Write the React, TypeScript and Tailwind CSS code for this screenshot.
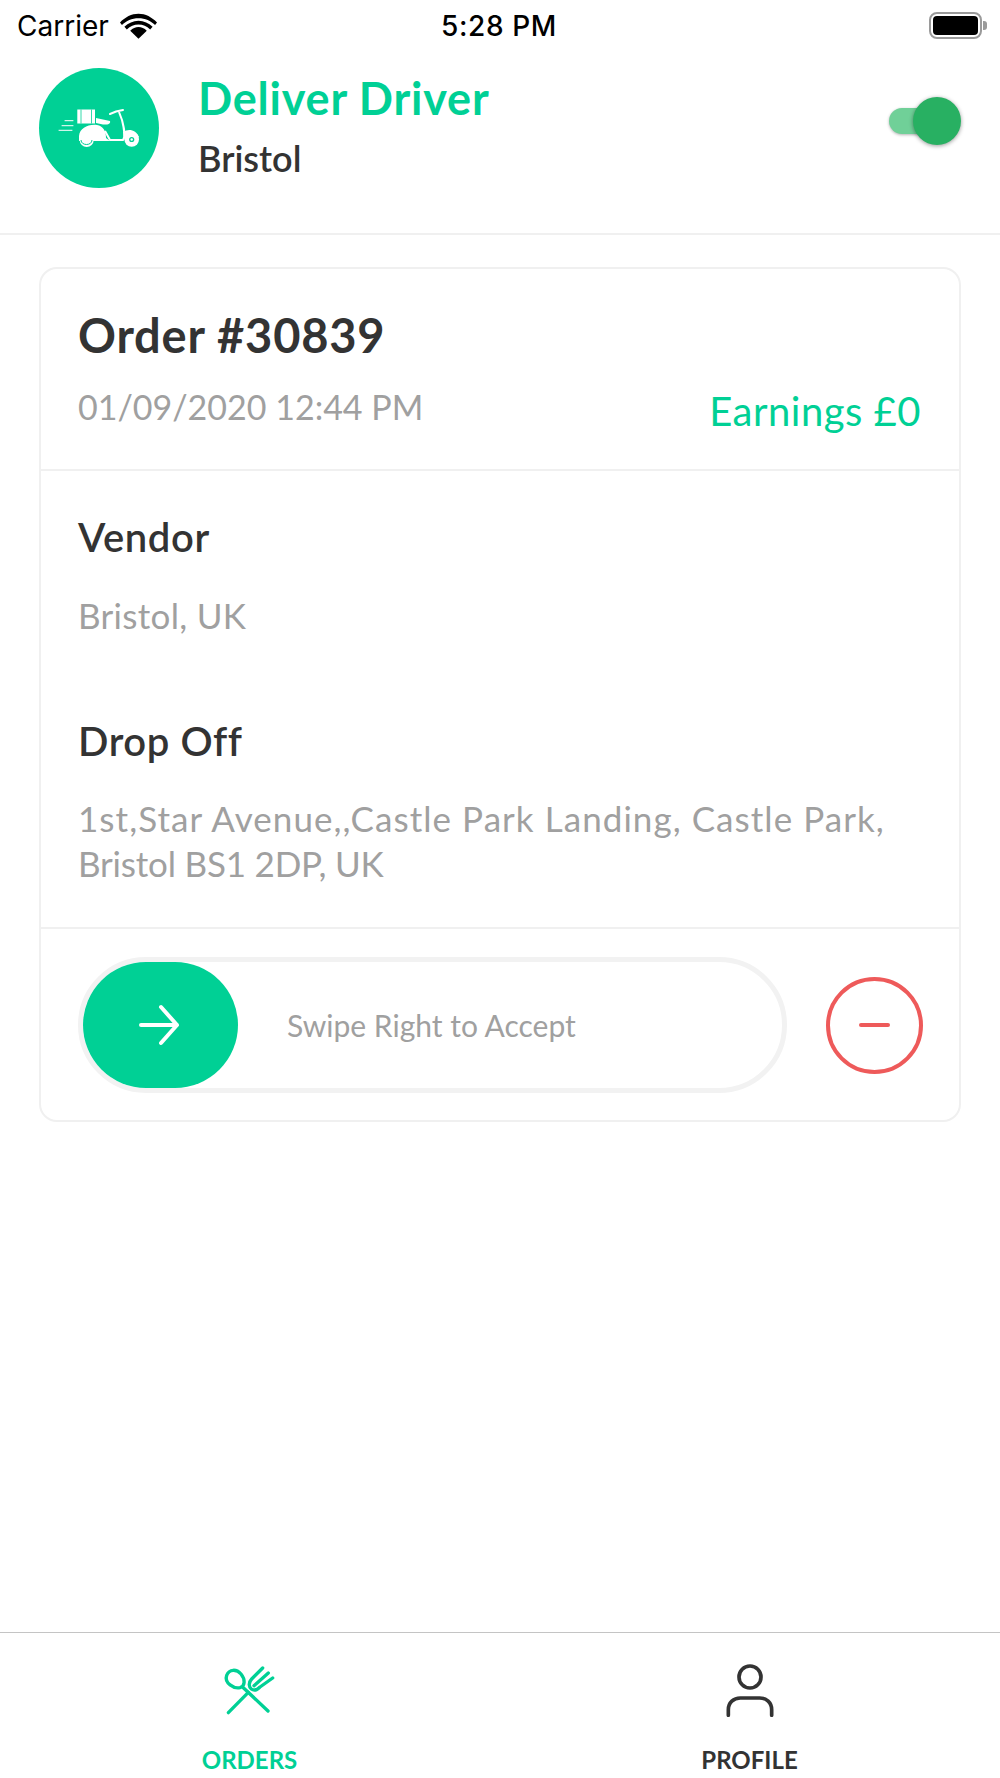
import React from "react";

const body = { fontFamily: "Lato, 'Noto Sans', sans-serif" };
const sys = { fontFamily: "Inter, Roboto, sans-serif" };

function Scooter() {
  return (
    <svg width="120" height="120" viewBox="0 0 120 120" className="block" fill="none">
      <g stroke="#fff" strokeWidth="1" strokeLinecap="round">
        <path d="M26 52.7H34M23 57.7H34M20 62.3H33" />
      </g>
      <path d="M38.3 41.500H56V55.500H38.300Z" fill="#fff" />
      <path d="M42 41.500V55.500M52.500 41.500V55.500" stroke="#00d095" strokeWidth="0.8" />
      <path d="M57 50L71 53C72 56 68 57 64 56.500L57 55Z" fill="#fff" />
      <path d="M40 68C41 60 49 56 58 57C64 58 67 63 67 70L71 73H40Z" fill="#fff" />
      <path d="M66 63L71 72H84C87 68 85 60 83 52L80 44" stroke="#fff" strokeWidth="2" />
      <path d="M71 46L77 43.500L84 42" stroke="#fff" strokeWidth="2" strokeLinecap="round" />
      <path d="M84 64C90 60 97 62 100 69L85 69Z" fill="#fff" />
      <circle cx="92.700" cy="71.500" r="7.300" fill="#fff" />
      <circle cx="92.700" cy="71.500" r="2.600" fill="#00d095" />
      <circle cx="92.700" cy="71.500" r="1.200" fill="#fff" />
      <circle cx="47.700" cy="72" r="7" fill="#fff" />
      <path d="M42 72C42 78 53 78 53 72" stroke="#00d095" strokeWidth="1" />
    </svg>
  );
}

function ForkSpoon() {
  return (
    <svg width="60" height="54" viewBox="120 130 180 162" fill="none" stroke="#00d095" strokeWidth="10" strokeLinecap="round" strokeLinejoin="round" className="block">
      <path d="M140 167C148 147 170 148 183 163C197 180 195 200 180 204C162 208 132 190 140 167Z" />
      <path d="M190 204L264 274" />
      <path d="M205 218L145 279" />
      <path d="M248 145L215 178C204 190 207 202 214 208C222 214 232 210 240 202L278 175" />
      <path d="M265 160L222 198" />
    </svg>
  );
}

function Person() {
  return (
    <svg width="60" height="54" viewBox="117 130 180 162" fill="none" stroke="#333" strokeWidth="11" strokeLinecap="round" className="block">
      <circle cx="207" cy="172" r="33" />
      <path d="M142 287V270C142 248 158 235 178 235H236C256 235 272 248 272 270V287" />
    </svg>
  );
}

export default function App() {
  return (
    <div className="w-[1000px] h-[1778px] bg-white flex flex-col overflow-hidden" style={body}>
      <div className="h-[60px] shrink-0 flex items-center justify-between pl-[17px] pr-[13px] text-black pb-[9px]" style={sys}>
        <div className="flex items-center gap-[11px] w-[200px]">
          <span className="text-[28px] leading-none">Carrier</span>
          <svg width="37" height="26" viewBox="0 0 38 26" className="block">
            <path d="M19 5C12 5 6.500 7.500 2 12L0 9.500C5 4 12 0.500 19 0.500C26 0.500 33 4 38 9.500L36 12C31.500 7.500 26 5 19 5Z" fill="#000" />
            <path d="M19 11.500C14.500 11.500 10.500 13.200 7 16.500L4.500 13.800C8.500 10 13.500 7.500 19 7.500C24.500 7.500 29.500 10 33.500 13.800L31 16.500C27.500 13.200 23.500 11.500 19 11.500Z" fill="#000" />
            <path d="M19 14C22 14 25 15.300 27.500 17.800L19 26L10.500 17.800C13 15.300 16 14 19 14Z" fill="#000" />
          </svg>
        </div>
        <span className="text-[28px] leading-none font-medium tracking-[0.6px] -translate-x-[3px]">5:28 PM</span>
        <div className="w-[200px] flex justify-end items-center gap-[1px]">
          <div className="w-[53px] h-[27px] rounded-[8px] border-[2px] border-[#9a9a9a] p-[2px]">
            <div className="w-full h-full rounded-[4px] bg-black" />
          </div>
          <div className="w-[4px] h-[9px] rounded-r-[3px] bg-[#9a9a9a]" />
        </div>
      </div>

      <header className="h-[175px] shrink-0 border-b-2 border-[#f0f0f0] flex items-start pl-[39px] pr-[39px] pt-[8px]">
        <div className="w-[120px] h-[120px] rounded-full bg-[#00d095] shrink-0">
          <Scooter />
        </div>
        <div className="ml-[39px] flex flex-col">
          <span className="text-[45px] leading-[60px] font-bold text-[#00d095] tracking-[0.8px]">Deliver Driver</span>
          <span className="text-[36px] leading-[50px] font-semibold text-[#333] mt-[5px]">Bristol</span>
        </div>
        <div className="ml-auto relative w-[72px] h-[48px] mt-[29px] flex items-center">
          <div className="w-[60px] h-[26px] rounded-full bg-[#70d098] shadow-[0_1px_3px_rgba(0,0,0,0.3)]" />
          <div className="absolute right-0 top-0 w-[48px] h-[48px] rounded-full bg-[#28b062] shadow-[0_1px_4px_rgba(0,0,0,0.4)]" />
        </div>
      </header>

      <main className="flex-1 px-[39px] pt-[32px]">
        <div className="w-[922px] h-[855px] border-2 border-[#f0f0f0] rounded-[18px] flex flex-col">
          <div className="h-[202px] shrink-0 border-b-2 border-[#f0f0f0] pl-[37px] pr-[38px] pt-[36px]">
            <div className="text-[47px] leading-[60px] font-bold text-[#333] tracking-[0.8px]">Order #30839</div>
            <div className="flex justify-between items-end mt-[20px]">
              <span className="text-[34px] leading-[44px] text-[#a0a0a0]">01/09/2020 12:44 PM</span>
              <span className="text-[40px] leading-[44px] text-[#00d095] tracking-[0.5px] translate-y-[4px]">Earnings £0</span>
            </div>
          </div>
          <div className="h-[458px] shrink-0 border-b-2 border-[#f0f0f0] px-[37px] pt-[40px]">
            <div className="text-[40px] leading-[52px] font-semibold text-[#333] tracking-[0.6px]">Vendor</div>
            <div className="text-[35px] leading-[44px] text-[#a0a0a0] tracking-[0.3px] mt-[30px]">Bristol, UK</div>
            <div className="text-[40px] leading-[52px] font-semibold text-[#333] tracking-[0.6px] mt-[78px]">Drop Off</div>
            <div className="text-[35px] leading-[45px] text-[#a0a0a0] mt-[29px]">
              <span className="tracking-[1.05px]">1st,Star Avenue,,Castle Park Landing, Castle Park,</span>
              <br />
              <span className="tracking-[-0.2px]">Bristol BS1 2DP, UK</span>
            </div>
          </div>
          <div className="flex-1 flex items-center pl-[37px] pt-[1px]">
            <div className="w-[709px] h-[136px] rounded-full border-[5px] border-[#f2f2f2] flex items-center">
              <div className="w-[155px] h-[126px] rounded-[63px] bg-[#00d095] flex items-center justify-center shrink-0">
                <svg width="42" height="42" viewBox="0 0 42 42" fill="none" stroke="#fff" strokeWidth="4" strokeLinecap="round" strokeLinejoin="round" className="block -translate-x-[2px]">
                  <path d="M3 21H39M23 3L39 21L23 39" />
                </svg>
              </div>
              <span className="ml-[49px] text-[30px] text-[#a0a0a0]">Swipe Right to Accept</span>
            </div>
            <div className="ml-[39px] w-[97px] h-[97px] rounded-full border-[4px] border-[#ee5a5a] flex items-center justify-center">
              <div className="w-[31px] h-[4px] rounded-full bg-[#ee5a5a]" />
            </div>
          </div>
        </div>
      </main>

      <nav className="h-[146px] shrink-0 border-t-[1.5px] border-[#c4c4c4] flex">
        <div className="w-[499px] flex flex-col items-center pt-[30px]">
          <ForkSpoon />
          <span className="text-[24px] leading-[30px] font-bold text-[#00d095] mt-[28px]">ORDERS</span>
        </div>
        <div className="flex-1 flex flex-col items-center pt-[30px]">
          <Person />
          <span className="text-[24px] leading-[30px] font-bold text-[#333] mt-[28px]">PROFILE</span>
        </div>
      </nav>
    </div>
  );
}
